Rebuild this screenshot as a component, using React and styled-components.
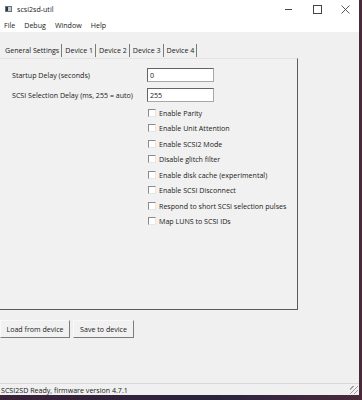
import React, { useState } from 'react';
import styled, { createGlobalStyle } from 'styled-components';

const GlobalStyle = createGlobalStyle`
  html, body {
    margin: 0;
    padding: 0;
    background: #2b1d33;
  }
  * { box-sizing: border-box; }
`;

const Desktop = styled.div`
  width: 362px;
  height: 400px;
  background: linear-gradient(90deg, #3a2238, #2a2340 60%, #4a2a3a);
  font-family: "Open Sans", "Noto Sans", sans-serif;
  font-size: 7.1px;
  color: #1a1a1a;
`;

const Window = styled.div`
  width: 359px;
  height: 395px;
  display: flex;
  flex-direction: column;
  background: #f0f0f0;
`;

const TitleBar = styled.div`
  height: 18px;
  background: #fff;
  display: flex;
  align-items: center;
  padding-left: 5px;
`;

const AppIcon = styled.div`
  width: 7px;
  height: 6px;
  border: 1px solid #6b7480;
  background: linear-gradient(90deg, #2d3440 40%, #c8ccd2 40%);
  margin-right: 5px;
`;

const Title = styled.span`
  flex: 1;
`;

const Controls = styled.div`
  display: flex;
  height: 100%;
`;

const ControlButton = styled.div`
  width: 28px;
  display: flex;
  align-items: center;
  justify-content: center;
`;

const MenuBar = styled.div`
  height: 14px;
  background: #fff;
  display: flex;
  align-items: center;
  gap: 9px;
  padding-left: 4px;
`;

const Body = styled.div`
  flex: 1;
  display: flex;
  flex-direction: column;
  padding-top: 11px;
`;

const TabStrip = styled.div`
  display: flex;
  height: 15px;
  align-items: center;
  padding-left: 5px;
`;

const Tab = styled.div`
  padding: 0 2px 0 2px;
  height: 13px;
  line-height: 13px;
  white-space: nowrap;
  border-right: 1px solid #7a7a7a;
  margin-right: 1px;
  padding-left: ${p => (p.$active ? '0' : '2px')};
`;

const Panel = styled.div`
  width: 298px;
  height: 252px;
  border-right: 1px solid #5c5c5c;
  border-bottom: 1px solid #5c5c5c;
  border-top: 1px solid #e3e3e3;
  background: #f1f1f1;
  padding: 9px 0 0 12px;
  display: flex;
  flex-direction: column;
`;

const FieldRow = styled.div`
  display: flex;
  align-items: center;
  height: 14px;
  margin-bottom: 6px;
`;

const FieldLabel = styled.label`
  width: 135px;
  white-space: nowrap;
`;

const TextBox = styled.input`
  width: 67px;
  height: 14px;
  border: 1px solid #a8a8a8;
  border-top-color: #646464;
  border-left-color: #646464;
  background: #fff;
  font: inherit;
  color: inherit;
  padding: 0 0 0 2px;
  outline: none;
`;

const Checks = styled.div`
  display: flex;
  flex-direction: column;
  padding-left: 136px;
  margin-top: -3px;
`;

const CheckRow = styled.label`
  display: flex;
  align-items: center;
  height: 15.5px;
  white-space: nowrap;
`;

const CheckBox = styled.span`
  width: 8px;
  height: 8px;
  flex: none;
  background: #fff;
  border-top: 1px solid #8a8a8a;
  border-left: 1px solid #8a8a8a;
  border-right: 1px solid #e6e6e6;
  border-bottom: 1px solid #e6e6e6;
  margin-right: 3px;
`;

const ButtonRow = styled.div`
  display: flex;
  gap: 3px;
  margin-top: 10px;
`;

const Button = styled.button`
  height: 18px;
  font: inherit;
  color: #1a1a1a;
  white-space: nowrap;
  background: #f1f1f1;
  border: 1px solid #f8f8f8;
  border-right-color: #7c7c7c;
  border-bottom-color: #7c7c7c;
  padding: 0;
  width: ${p => p.$width}px;
`;

const StatusBar = styled.div`
  margin-top: auto;
  height: 12px;
  border-top: 1px solid #d8d8d8;
  display: flex;
  align-items: center;
  padding-left: 1px;
  position: relative;
`;

const Grip = styled.div`
  position: absolute;
  right: 1px;
  bottom: 1px;
  width: 8px;
  height: 8px;
  background: repeating-linear-gradient(135deg, transparent 0 2px, #a0a0a0 2px 3px);
`;

const options = [
  'Enable Parity',
  'Enable Unit Attention',
  'Enable SCSI2 Mode',
  'Disable glitch filter',
  'Enable disk cache (experimental)',
  'Enable SCSI Disconnect',
  'Respond to short SCSI selection pulses',
  'Map LUNS to SCSI IDs',
];

const tabs = ['General Settings', 'Device 1', 'Device 2', 'Device 3', 'Device 4'];

const App = () => {
  const [startup, setStartup] = useState('0');
  const [selDelay, setSelDelay] = useState('255');

  return (
    <Desktop>
      <GlobalStyle />
      <Window>
        <TitleBar>
          <AppIcon />
          <Title>scsi2sd-util</Title>
          <Controls>
            <ControlButton>
              <svg width="8" height="8" viewBox="0 0 8 8"><path d="M0 4.5h7" stroke="#444" strokeWidth="1" /></svg>
            </ControlButton>
            <ControlButton>
              <svg width="9" height="9" viewBox="0 0 9 9"><rect x="0.5" y="0.5" width="8" height="8" fill="none" stroke="#444" /></svg>
            </ControlButton>
            <ControlButton>
              <svg width="9" height="9" viewBox="0 0 9 9"><path d="M0.5 0.5l8 8M8.5 0.5l-8 8" stroke="#444" strokeWidth="0.9" /></svg>
            </ControlButton>
          </Controls>
        </TitleBar>
        <MenuBar>
          <span>File</span>
          <span>Debug</span>
          <span>Window</span>
          <span>Help</span>
        </MenuBar>
        <Body>
          <TabStrip>
            {tabs.map((t, i) => (
              <Tab key={t} $active={i === 0}>{t}</Tab>
            ))}
          </TabStrip>
          <Panel>
            <FieldRow>
              <FieldLabel>Startup Delay (seconds)</FieldLabel>
              <TextBox value={startup} onChange={e => setStartup(e.target.value)} />
            </FieldRow>
            <FieldRow>
              <FieldLabel>SCSI Selection Delay (ms, 255 = auto)</FieldLabel>
              <TextBox value={selDelay} onChange={e => setSelDelay(e.target.value)} />
            </FieldRow>
            <Checks>
              {options.map(o => (
                <CheckRow key={o}>
                  <CheckBox />
                  {o}
                </CheckRow>
              ))}
            </Checks>
          </Panel>
          <ButtonRow>
            <Button $width={70}>Load from device</Button>
            <Button $width={61}>Save to device</Button>
          </ButtonRow>
          <StatusBar>
            SCSI2SD Ready, firmware version 4.7.1
            <Grip />
          </StatusBar>
        </Body>
      </Window>
    </Desktop>
  );
};

export default App;
